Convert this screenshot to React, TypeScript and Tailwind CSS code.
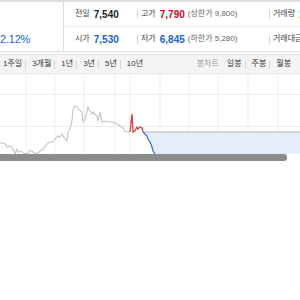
const grayLine =
  '0,144 3,144 5,145 7,148 10,147 13,150 15,155 17,150 18,153 21,152 25,155 28,154 30,151 33,153 37,155 40,152 43,150 47,145 50,143 53,143 55,140 58,137 60,138 62,135 63,137 65,140 67,142 68,133 70,130 72,122 73,110 75,107 77,108 78,110 82,113 83,123 85,120 87,113 88,108 90,112 92,115 93,113 97,117 98,122 100,113 102,123 105,122 108,123 110,123 113,123 117,125 120,127 123,129 125,132 128,133 130,133'

const redLine = '130,133 132,115 133,133 135,132 137,128 138,130 140,128 142,129 143,133'
const blueLine = '143,133 147,137 148,140 150,143 152,148 153,152 155,155'

const gridX = [26, 55, 84, 115, 130, 160, 189, 218, 248, 278]

function Sep() {
  return <span className="inline-block w-px h-[9px] bg-[#d5d5d5] mr-[3px]" />
}

function PriceChart() {
  return (
    <svg width="300" height="80" viewBox="0 75 300 80" className="block">
      {gridX.map((x) => (
        <line key={x} x1={x} y1={75} x2={x} y2={155} stroke="#ededed" strokeWidth="1" />
      ))}
      <line x1={0} y1={95.5} x2={300} y2={95.5} stroke="#ededed" />
      <line x1={0} y1={127.5} x2={300} y2={127.5} stroke="#ededed" />
      <polygon points={`143,133 ${blueLine} 300,155 300,133`} fill="#e5edfa" />
      <line x1={143} y1={133} x2={300} y2={133} stroke="#b8b8b8" />
      <polyline points={grayLine} fill="none" stroke="#c4c4c4" strokeWidth="1.1" />
      <polyline points={redLine} fill="none" stroke="#e0303a" strokeWidth="1.2" />
      <polyline points={blueLine} fill="none" stroke="#2a6fd6" strokeWidth="1.2" />
    </svg>
  )
}

export default function App() {
  return (
    <div
      className="w-[300px] h-[300px] overflow-hidden bg-white"
      style={{ fontFamily: '"Liberation Sans", "Noto Sans CJK KR", sans-serif' }}
    >
      <div className="border-t-2 border-[#6f6f6f] flex h-[52px] border-b border-[#dcdcdc]">
        <div className="w-[64px] shrink-0 border-r border-[#dcdcdc] flex flex-col">
          <div className="h-[25px]" />
          <div className="flex-1 flex items-center text-[11px] text-[#1d5fd0] -tracking-[0.2px]">2.12%</div>
        </div>
        <div className="flex-1 flex flex-col">
          <div className="h-[25px] border-b border-[#ebebeb] flex items-center text-[9px] whitespace-nowrap">
            <div className="w-[73px] pl-[11px] flex items-center">
              <span className="text-[#444] text-[8px]">전일</span>
              <span className="ml-[4px] font-bold text-[10px] text-[#222]">7,540</span>
            </div>
            <div className="w-[132px] flex items-center">
              <Sep />
              <span className="text-[#444] text-[8px]">고가</span>
              <span className="ml-[4px] font-bold text-[10px] text-[#d0021b]">7,790</span>
              <span className="ml-[3px] text-[#666] text-[8px]">(상한가 9,800)</span>
            </div>
            <div className="flex items-center">
              <Sep />
              <span className="text-[#444] text-[8px]">거래량</span>
              <span className="ml-[4px] font-bold text-[10px] text-[#222]">1</span>
            </div>
          </div>
          <div className="flex-1 flex items-center text-[9px] whitespace-nowrap">
            <div className="w-[73px] pl-[11px] flex items-center">
              <span className="text-[#444] text-[8px]">시가</span>
              <span className="ml-[4px] font-bold text-[10px] text-[#1d5fd0]">7,530</span>
            </div>
            <div className="w-[132px] flex items-center">
              <Sep />
              <span className="text-[#444] text-[8px]">저가</span>
              <span className="ml-[4px] font-bold text-[10px] text-[#1d5fd0]">6,845</span>
              <span className="ml-[3px] text-[#666] text-[8px]">(하한가 5,280)</span>
            </div>
            <div className="flex items-center">
              <Sep />
              <span className="text-[#444] text-[8px]">거래대금</span>
            </div>
          </div>
        </div>
      </div>

      <div className="mt-[2px] h-[20px] bg-[#f4f4f4] border-y border-[#e6e6e6] flex items-center justify-between text-[8px] text-[#333] whitespace-nowrap">
        <div className="flex items-center pl-[3px] gap-[3px]">
          <span>1주일</span>
          <Sep />
          <span>3개월</span>
          <Sep />
          <span>1년</span>
          <Sep />
          <span>3년</span>
          <Sep />
          <span>5년</span>
          <Sep />
          <span>10년</span>
        </div>
        <div className="flex items-center gap-[3px] pr-[9px]">
          <span className="text-[#999] mr-[5px]">봉차트</span>
          <span>일봉</span>
          <Sep />
          <span>주봉</span>
          <Sep />
          <span>월봉</span>
        </div>
      </div>

      <PriceChart />
      <div className="w-[287px] h-[7px] bg-[#8c8c8c] rounded-r-[3px]" />
    </div>
  )
}
